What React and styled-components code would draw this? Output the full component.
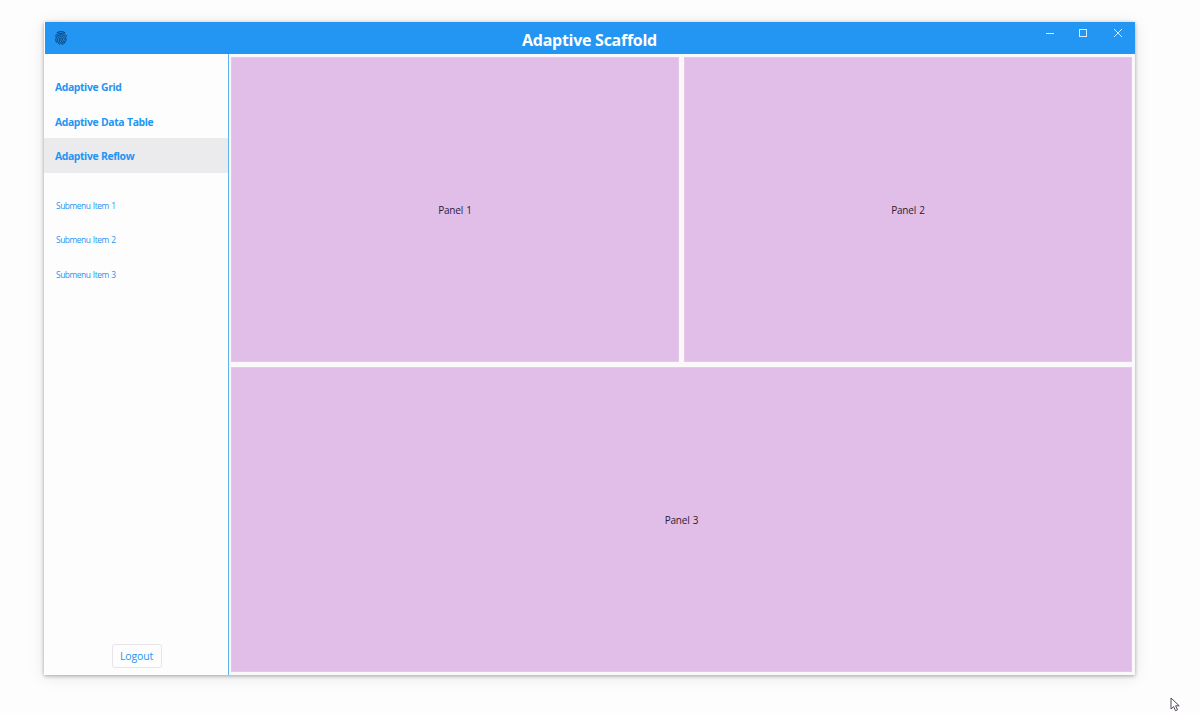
import React from "react";
import styled, { createGlobalStyle } from "styled-components";
import { MdFingerprint } from "react-icons/md";

const GlobalStyle = createGlobalStyle`
  * { box-sizing: border-box; }
  body {
    margin: 0;
    background: #fefdfe;
    font-family: "Open Sans", "Noto Sans", sans-serif;
    overflow: hidden;
  }
`;

const Desktop = styled.div`
  height: 713px;
  padding: 22px 65px 38px 44px;
`;

const Window = styled.div`
  height: 653px;
  display: flex;
  flex-direction: column;
  background: #fefdfe;
  box-shadow: 0 1px 4px rgba(0, 0, 0, 0.32), 0 2px 16px rgba(0, 0, 0, 0.09);
`;

const TitleBar = styled.header`
  height: 32px;
  flex: none;
  display: grid;
  grid-template-columns: 109px 1fr 110px;
  margin-left: 1px;
  background: #2395f3;
`;

const AppIcon = styled.div`
  padding: 8px 0 0 8px;
  color: #0b3f70;
  line-height: 0;

  svg {
    stroke: none;
  }

  path:last-child {
    stroke: #0b3f70;
    stroke-width: 0.3px;
  }
`;

const Title = styled.h1`
  margin: 0;
  text-align: center;
  font-size: 16px;
  line-height: 36px;
  font-weight: 700;
  letter-spacing: -0.27px;
  color: #fff;
`;

const Controls = styled.div`
  display: flex;
  justify-content: flex-end;
  padding: 5px 11px 0 0;

  svg {
    display: block;
    fill: none;
    stroke: #d6ecff;
  }

  svg + svg {
    margin-left: 21px;
  }

  svg:last-child {
    margin-left: 23px;
  }
`;

const Body = styled.div`
  flex: 1;
  display: flex;
  min-height: 0;
`;

const Sidebar = styled.nav`
  width: 185px;
  display: flex;
  flex-direction: column;
  border-right: 1px solid #5fb3ee;
  padding-top: 15px;
  color: #2395f3;
`;

const MenuItem = styled.a`
  height: 34.6px;
  padding-left: 11px;
  font-size: 10.4px;
  line-height: 36.6px;
  font-weight: 700;
  letter-spacing: -0.4px;
  word-spacing: 0.6px;
  white-space: nowrap;
  background: ${(p) => (p.$active ? "#ebeaec" : "transparent")};
`;

const Submenu = styled.div`
  display: flex;
  flex-direction: column;
  padding: 14px 0 0 12px;
`;

const SubItem = styled.a`
  height: 34.5px;
  font-size: 8.4px;
  line-height: 37px;
  letter-spacing: -0.44px;
  word-spacing: 0.6px;
`;

const Logout = styled.button`
  width: 50px;
  height: 24px;
  margin: auto 0 7px 67.5px;
  padding: 0;
  border: 1px solid #e6e4e9;
  border-radius: 3px;
  background: transparent;
  font: 10.5px/23px "Open Sans", "Noto Sans", sans-serif;
  letter-spacing: -0.15px;
  color: #2395f3;
`;

const Panels = styled.main`
  flex: 1;
  display: grid;
  grid-template: 1fr 1fr / 1fr 1fr;
  gap: 5px;
  padding: 3px 3px 3px 2px;
  background: #faf8fb;
`;

const Panel = styled.section`
  display: flex;
  align-items: center;
  justify-content: center;
  grid-column: ${(p) => (p.$wide ? "1 / -1" : "auto")};
  border: 1px solid #e5c8e9;
  background: #e1bee7;
  color: #2d2033;
  font-size: 10px;
  letter-spacing: -0.2px;
  word-spacing: 0.9px;
`;

const Cursor = styled.svg`
  position: absolute;
  left: 1170px;
  top: 697px;
`;

export default function App() {
  return (
    <>
      <GlobalStyle />
      <Desktop>
        <Window>
          <TitleBar>
            <AppIcon><MdFingerprint size={16} /></AppIcon>
            <Title>Adaptive Scaffold</Title>
            <Controls>
              <svg width="12" height="12"><path d="M2 6.5h8" /></svg>
              <svg width="12" height="12"><rect x="2.5" y="2.5" width="7" height="7" /></svg>
              <svg width="12" height="12"><path d="M2 2l8 8M10 2l-8 8" /></svg>
            </Controls>
          </TitleBar>
          <Body>
            <Sidebar>
              <MenuItem>Adaptive Grid</MenuItem>
              <MenuItem>Adaptive Data Table</MenuItem>
              <MenuItem $active>Adaptive Reflow</MenuItem>
              <Submenu>
                <SubItem>Submenu Item 1</SubItem>
                <SubItem>Submenu Item 2</SubItem>
                <SubItem>Submenu Item 3</SubItem>
              </Submenu>
              <Logout>Logout</Logout>
            </Sidebar>
            <Panels>
              <Panel>Panel 1</Panel>
              <Panel>Panel 2</Panel>
              <Panel $wide>Panel 3</Panel>
            </Panels>
          </Body>
        </Window>
      </Desktop>
      <Cursor width="12" height="16" viewBox="0 0 12 16">
        <path d="M1 1v11l2.6-2.4 1.9 4.1 2-.9-1.9-4h3.6z" fill="#fff" stroke="#54465a" />
      </Cursor>
    </>
  );
}
